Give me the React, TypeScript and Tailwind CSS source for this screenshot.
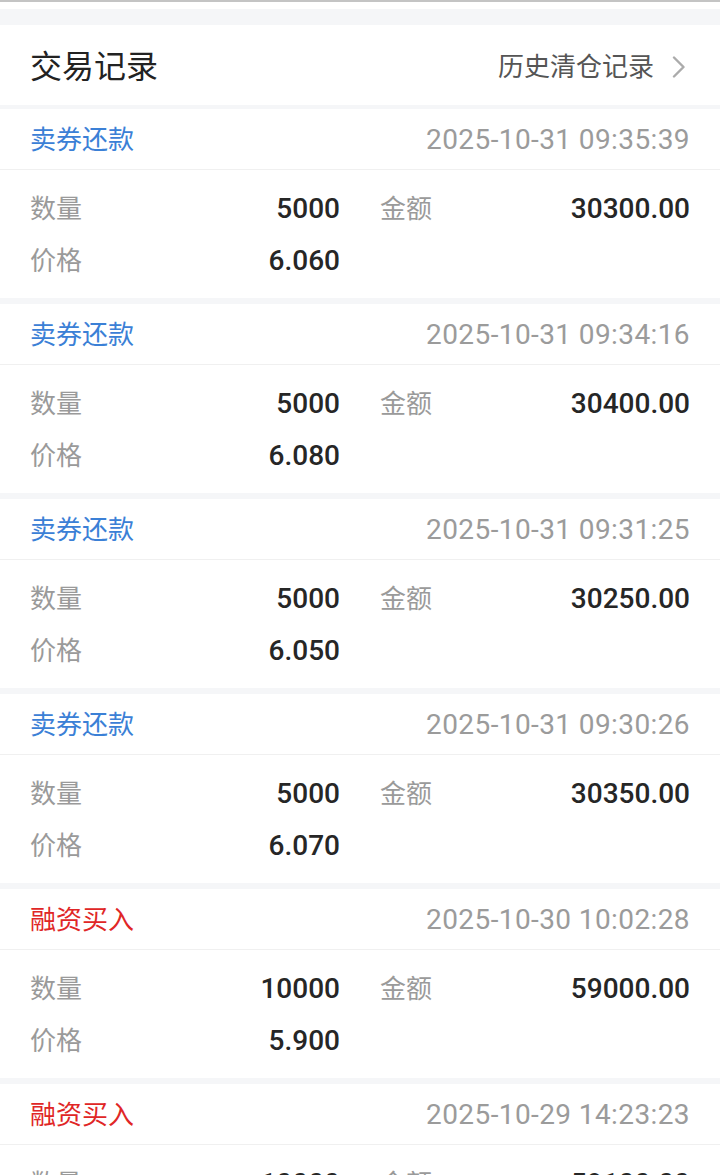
import React from "react";

type Trade = {
  type: string;
  buy: boolean;
  time: string;
  qty: string;
  amount: string;
  price: string;
};

const trades: Trade[] = [
  { type: "卖券还款", buy: false, time: "2025-10-31 09:35:39", qty: "5000", amount: "30300.00", price: "6.060" },
  { type: "卖券还款", buy: false, time: "2025-10-31 09:34:16", qty: "5000", amount: "30400.00", price: "6.080" },
  { type: "卖券还款", buy: false, time: "2025-10-31 09:31:25", qty: "5000", amount: "30250.00", price: "6.050" },
  { type: "卖券还款", buy: false, time: "2025-10-31 09:30:26", qty: "5000", amount: "30350.00", price: "6.070" },
  { type: "融资买入", buy: true, time: "2025-10-30 10:02:28", qty: "10000", amount: "59000.00", price: "5.900" },
  { type: "融资买入", buy: true, time: "2025-10-29 14:23:23", qty: "10000", amount: "59100.00", price: "5.910" },
];

const Cell = ({ label, value }: { label: string; value?: string }) => (
  <div className="flex items-center justify-between h-[52px]">
    <span className="text-[26px] text-[#9a9a9a]">{label}</span>
    {value && <span className="text-[28px] font-medium text-[#262626]">{value}</span>}
  </div>
);

const TradeCard = ({ t }: { t: Trade }) => (
  <div className="bg-white">
    <div className="flex items-center justify-between h-[61px] pt-[2px] px-[30px] border-b border-[#f0f0f0]">
      <span className={`text-[26px] ${t.buy ? "text-[#e02626]" : "text-[#3b80d6]"}`}>{t.type}</span>
      <span className="text-[28px] tracking-[0.4px] text-[#9b9b9b]">{t.time}</span>
    </div>
    <div className="grid grid-cols-2 gap-x-[40px] px-[30px] pt-[13px] pb-[11px]">
      <Cell label="数量" value={t.qty} />
      <Cell label="金额" value={t.amount} />
      <Cell label="价格" value={t.price} />
      <div />
    </div>
  </div>
);

export default function App() {
  return (
    <div
      className="w-[720px] h-[1175px] overflow-hidden bg-[#f5f6f8]"
      style={{ fontFamily: 'Roboto, "Noto Sans CJK SC", sans-serif' }}
    >
      <div className="h-[2px] bg-[#c4c4c4]" />
      <div className="h-[7px] bg-white" />
      <div className="h-[16px]" />
      <div className="flex items-center justify-between h-[80px] bg-white pt-[4px] pl-[30px] pr-[34px]">
        <span className="text-[32px] text-[#222]">交易记录</span>
        <div className="flex items-center gap-[18px] text-[#555]">
          <span className="text-[26px]">历史清仓记录</span>
          <svg width="14" height="22" viewBox="0 0 14 22" fill="none">
            <path d="M2 1.5 L11.5 11 L2 20.5" stroke="#ababab" strokeWidth="2.4" strokeLinecap="round" strokeLinejoin="round" />
          </svg>
        </div>
      </div>
      <div className="flex flex-col gap-[6px] pt-[4px]">
        {trades.map((t, i) => (
          <TradeCard key={i} t={t} />
        ))}
      </div>
    </div>
  );
}
